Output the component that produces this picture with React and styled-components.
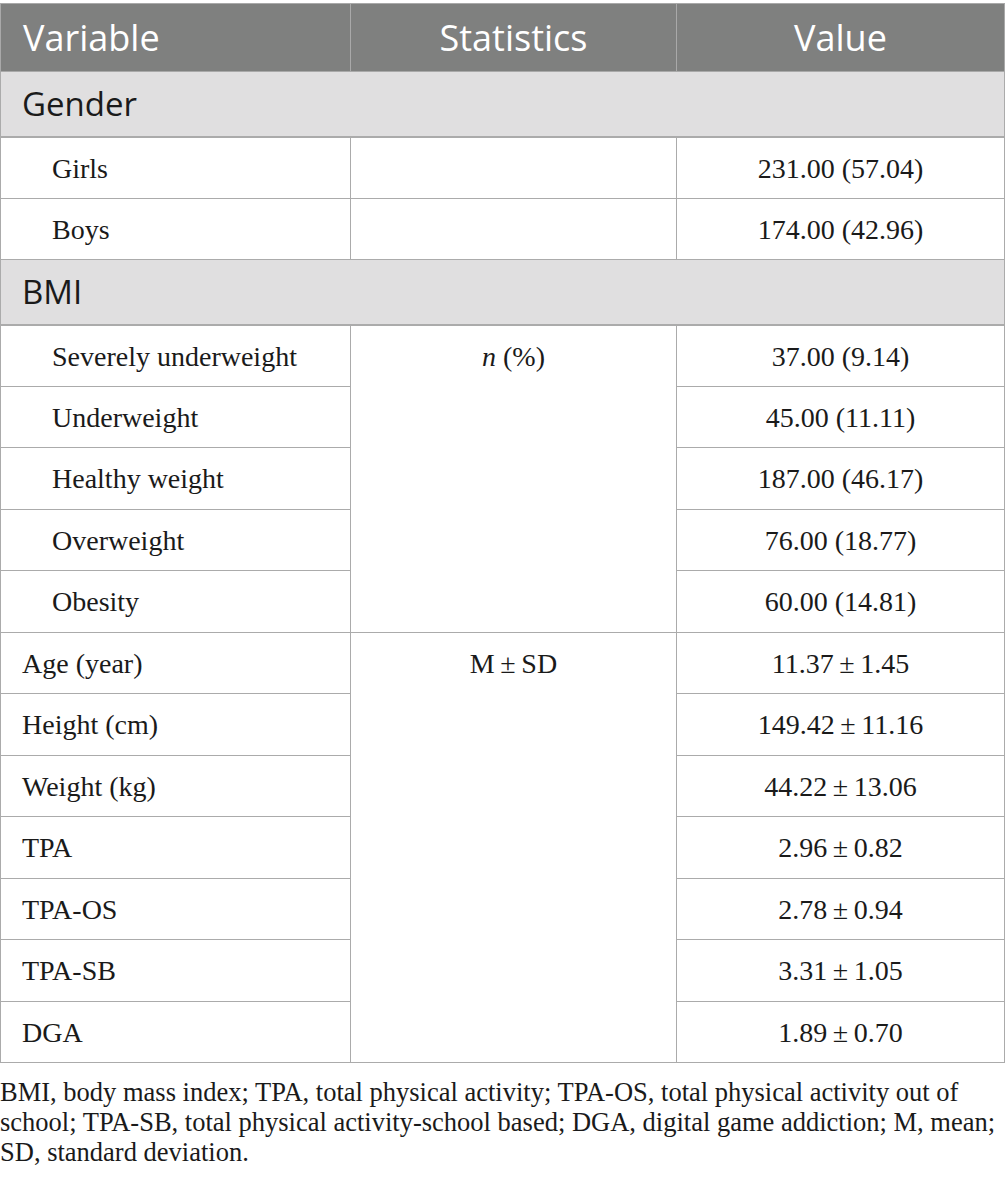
import React from "react";
import styled, { createGlobalStyle } from "styled-components";

const GlobalStyle = createGlobalStyle`
  body {
    margin: 0;
    background: #ffffff;
  }
`;

const rows = [
  { section: "Gender" },
  { label: "Girls", sub: true, stat: "", value: "231.00 (57.04)" },
  { label: "Boys", sub: true, stat: "", value: "174.00 (42.96)" },
  { section: "BMI" },
  { label: "Severely underweight", sub: true, stat: "n", span: 5, value: "37.00 (9.14)" },
  { label: "Underweight", sub: true, value: "45.00 (11.11)" },
  { label: "Healthy weight", sub: true, value: "187.00 (46.17)" },
  { label: "Overweight", sub: true, value: "76.00 (18.77)" },
  { label: "Obesity", sub: true, value: "60.00 (14.81)" },
  { label: "Age (year)", stat: "M\u2009±\u2009SD", span: 7, value: "11.37\u2009±\u20091.45" },
  { label: "Height (cm)", value: "149.42\u2009±\u200911.16" },
  { label: "Weight (kg)", value: "44.22\u2009±\u200913.06" },
  { label: "TPA", value: "2.96\u2009±\u20090.82" },
  { label: "TPA-OS", value: "2.78\u2009±\u20090.94" },
  { label: "TPA-SB", value: "3.31\u2009±\u20091.05" },
  { label: "DGA", value: "1.89\u2009±\u20090.70" },
];

export default function App() {
  return (
    <Page>
      <GlobalStyle />
      <Table>
        <colgroup>
          <col style={{ width: 350 }} />
          <col style={{ width: 326 }} />
          <col style={{ width: 328 }} />
        </colgroup>
        <thead>
          <tr>
            <HeadCell align="left">Variable</HeadCell>
            <HeadCell>Statistics</HeadCell>
            <HeadCell>Value</HeadCell>
          </tr>
        </thead>
        <tbody>
          {rows.map((row, idx) =>
            row.section ? (
              <tr key={idx}>
                <SectionCell colSpan={3}>{row.section}</SectionCell>
              </tr>
            ) : (
              <Row key={idx}>
                <Cell indent={row.sub}>{row.label}</Cell>
                {row.stat !== undefined && (
                  <Cell center rowSpan={row.span || 1}>
                    {row.stat === "n" ? (
                      <>
                        <i>n</i> (%)
                      </>
                    ) : (
                      row.stat
                    )}
                  </Cell>
                )}
                <Cell center>{row.value}</Cell>
              </Row>
            )
          )}
        </tbody>
      </Table>
      <Note>
        BMI, body mass index; TPA, total physical activity; TPA-OS, total
        physical activity out of school; TPA-SB, total physical activity-school
        based; DGA, digital game addiction; M, mean; SD, standard deviation.
      </Note>
    </Page>
  );
}

const Page = styled.div`
  width: 1005px;
  padding-top: 3px;
`;

const Table = styled.table`
  width: 1004px;
  border-collapse: collapse;
  table-layout: fixed;
  border: 1px solid #ababab;
`;

const HeadCell = styled.th`
  height: 68px;
  padding: 0 22px;
  box-sizing: border-box;
  background: #7f807f;
  color: #ffffff;
  font-family: "Open Sans", "Noto Sans", sans-serif;
  font-size: 36px;
  font-weight: 400;
  text-align: ${(p) => p.align || "center"};
  border: 1px solid #a9a9a9;
  vertical-align: middle;
`;

const SectionCell = styled.td`
  height: 65px;
  padding: 0 21px;
  box-sizing: border-box;
  background: #e0dfe0;
  color: #1a1a1a;
  font-family: "Open Sans", "Noto Sans", sans-serif;
  font-size: 33px;
  border: 1px solid #ababab;
  border-bottom-width: 2px;
  vertical-align: middle;
`;

const Row = styled.tr`
  height: 61.5px;
`;

const Cell = styled.td`
  padding: 14px 0 0 ${(p) => (p.indent ? "51px" : p.center ? "0" : "21px")};
  box-sizing: border-box;
  color: #1a1a1a;
  font-family: "Liberation Serif", "Times New Roman", serif;
  font-size: 28px;
  line-height: 34px;
  text-align: ${(p) => (p.center ? "center" : "left")};
  vertical-align: top;
  border: 1px solid #ababab;
`;

const Note = styled.p`
  margin: 14px 0 0;
  color: #1a1a1a;
  font-family: "Liberation Serif", "Times New Roman", serif;
  font-size: 26.5px;
  line-height: 30px;
`;
